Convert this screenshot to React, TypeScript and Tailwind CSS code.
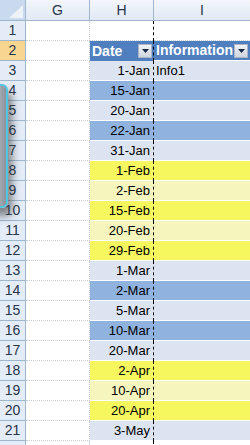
import React from 'react'

type Band = 'light' | 'blue' | 'yellow' | 'pale'

const rows: { date: string; info?: string; band: Band }[] = [
  { date: '1-Jan', info: 'Info1', band: 'light' },
  { date: '15-Jan', band: 'blue' },
  { date: '20-Jan', band: 'light' },
  { date: '22-Jan', band: 'blue' },
  { date: '31-Jan', band: 'light' },
  { date: '1-Feb', band: 'yellow' },
  { date: '2-Feb', band: 'pale' },
  { date: '15-Feb', band: 'yellow' },
  { date: '20-Feb', band: 'pale' },
  { date: '29-Feb', band: 'yellow' },
  { date: '1-Mar', band: 'light' },
  { date: '2-Mar', band: 'blue' },
  { date: '5-Mar', band: 'light' },
  { date: '10-Mar', band: 'blue' },
  { date: '20-Mar', band: 'light' },
  { date: '2-Apr', band: 'yellow' },
  { date: '10-Apr', band: 'pale' },
  { date: '20-Apr', band: 'yellow' },
  { date: '3-May', band: 'light' },
]

const bandClass: Record<Band, string> = {
  light: 'bg-[#dce4f1]',
  blue: 'bg-[#8fb3de]',
  yellow: 'bg-[#f6f65e]',
  pale: 'bg-[#f5f5bd]',
}

function RowNum({ n, active }: { n?: number; active?: boolean }) {
  return (
    <div
      className={`w-[26px] shrink-0 flex items-center justify-center border-r border-b border-[#9eb6ce] text-[14px] text-[#27364a] ${
        active ? 'bg-[#f9d592]' : 'bg-[#e4ecf7]'
      }`}
    >
      {n}
    </div>
  )
}

function FilterButton() {
  return (
    <div className="w-[14px] h-[14px] shrink-0 bg-gradient-to-b from-[#f0f2f6] to-[#cfd6e0] border border-[#a9b5c5] flex items-center justify-center">
      <svg width="7" height="4" viewBox="0 0 7 4">
        <path d="M0 0h7L3.5 4z" fill="#1b2a44" />
      </svg>
    </div>
  )
}

export default function App() {
  return (
    <div
      className="relative w-[250px] h-[445px] overflow-hidden bg-white"
      style={{ fontFamily: '"Liberation Sans", Arial, sans-serif' }}
    >
      {/* column headers */}
      <div className="flex h-[21px]">
        <div className="w-[26px] shrink-0 bg-[#c9d9ee] border-r border-b border-[#9eb6ce] flex items-end justify-end p-[2px]">
          <svg width="14" height="13" viewBox="0 0 14 13">
            <path d="M14 0v13H0z" fill="#eef3fa" />
          </svg>
        </div>
        <div className="w-[64px] shrink-0 bg-gradient-to-b from-[#f3f6fb] to-[#e1e9f4] border-r border-b border-[#9eb6ce] flex items-center justify-center text-[14px] text-[#27364a]">
          G
        </div>
        <div className="w-[64px] shrink-0 bg-gradient-to-b from-[#f3f6fb] to-[#e1e9f4] border-r border-b border-[#9eb6ce] flex items-center justify-center text-[14px] text-[#27364a]">
          H
        </div>
        <div className="flex-1 bg-gradient-to-b from-[#f3f6fb] to-[#e1e9f4] border-b border-[#9eb6ce] flex items-center justify-center text-[14px] text-[#27364a]">
          I
        </div>
      </div>

      {/* row 1 */}
      <div className="flex h-[20px]">
        <RowNum n={1} />
        <div className="w-[64px] shrink-0 border-r border-b border-dotted border-[#c8ced8]" />
        <div className="w-[64px] shrink-0 border-r border-dashed border-black border-b-0">
          <div className="h-full border-b border-dotted border-[#c8ced8]" />
        </div>
        <div className="flex-1 border-b border-dotted border-[#c8ced8]" />
      </div>

      {/* row 2: table header */}
      <div className="flex h-[20px]">
        <RowNum n={2} active />
        <div className="w-[64px] shrink-0 border-r border-b border-dotted border-[#c8ced8]" />
        <div className="w-[64px] shrink-0 bg-[#4f7fbf] border-r border-dashed border-black border-b-white flex items-center pl-[2px] pr-[1px] gap-1">
          <span className="flex-1 font-bold text-white text-[14px]">Date</span>
          <FilterButton />
        </div>
        <div className="flex-1 bg-[#4f7fbf] border-b border-white flex items-center pl-[2px] pr-[2px] gap-[1px] overflow-hidden">
          <span className="flex-1 font-bold text-white text-[14px] whitespace-nowrap overflow-hidden">Information</span>
          <FilterButton />
        </div>
      </div>

      {/* data rows */}
      {rows.map((r, i) => (
        <div key={i} className="flex h-[20px]">
          <RowNum n={i + 3} />
          <div className="w-[64px] shrink-0 border-r border-b border-dotted border-[#c8ced8]" />
          <div className={`w-[64px] shrink-0 border-r border-dashed border-black ${bandClass[r.band]}`}>
            <div className="h-full border-b border-white flex items-center justify-end pr-[3px] text-[13px] text-black">
              {r.date}
            </div>
          </div>
          <div className={`flex-1 border-b border-white flex items-center pl-[2px] text-[13px] text-black ${bandClass[r.band]}`}>
            {r.info}
          </div>
        </div>
      ))}

      <div className="flex h-[20px]">
        <RowNum />
        <div className="w-[64px] shrink-0 border-r border-dotted border-[#c8ced8]" />
        <div className="w-[64px] shrink-0 border-r border-dashed border-black" />
        <div className="flex-1" />
      </div>

      {/* overlapping window edge on the left */}
      <div className="absolute left-[-12px] top-[84px] w-[20px] h-[124px] rounded-r-[6px] border-2 border-[#52c4df] bg-gradient-to-r from-[#c7cbd2] to-[#8d939c] shadow-[4px_8px_8px_rgba(60,60,60,0.6)]" />
    </div>
  )
}
